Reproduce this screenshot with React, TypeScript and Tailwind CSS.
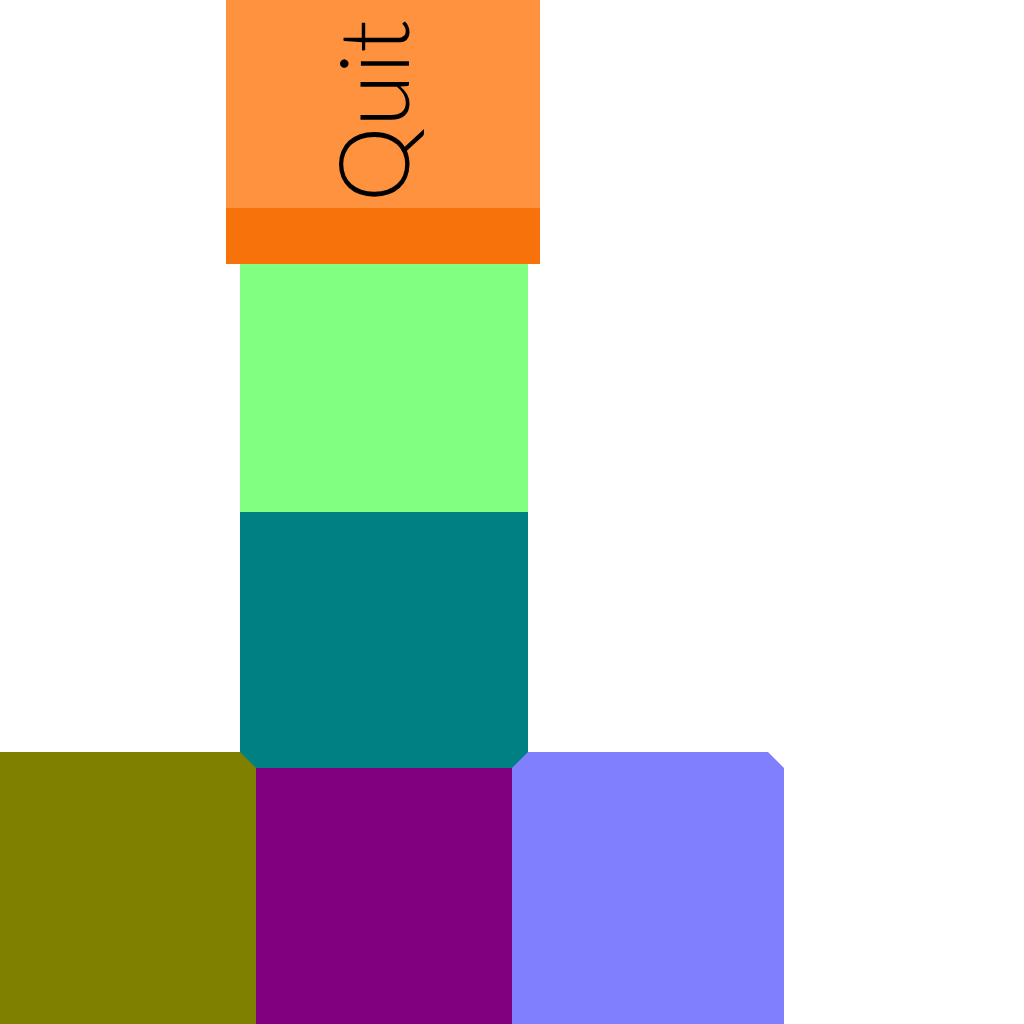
import React from "react";

export default function App() {
  return (
    <div className="w-[1024px] h-[1024px] bg-white overflow-hidden flex flex-col">
      <div className="ml-[226px] w-[314px] h-[264px] flex flex-col">
        <div className="h-[208px] bg-[#fe923f] flex items-end pl-[98px] pb-[6px]">
          <span className="[writing-mode:vertical-rl] rotate-180 text-[96px] leading-none font-light text-black" style={{ fontFamily: 'Lato, "Open Sans", sans-serif' }}>Quit</span>
        </div>
        <div className="h-[56px] bg-[#f7720b]" />
      </div>
      <div className="ml-[240px] w-[288px] h-[248px] bg-[#80ff80]" />
      <div className="relative z-10 ml-[240px] w-[288px] h-[256px] bg-[#008080] [clip-path:polygon(0_0,100%_0,100%_calc(100%-16px),calc(100%-16px)_100%,16px_100%,0_calc(100%-16px))]" />
      <div className="mt-[-16px] flex items-start">
        <div className="w-[256px] h-[272px] bg-[#808000]" />
        <div className="mt-[16px] w-[256px] h-[256px] bg-[#800080]" />
        <div className="w-[272px] h-[272px] bg-[#8080ff] [clip-path:polygon(0_0,calc(100%-16px)_0,100%_16px,100%_100%,0_100%)]" />
      </div>
    </div>
  );
}
